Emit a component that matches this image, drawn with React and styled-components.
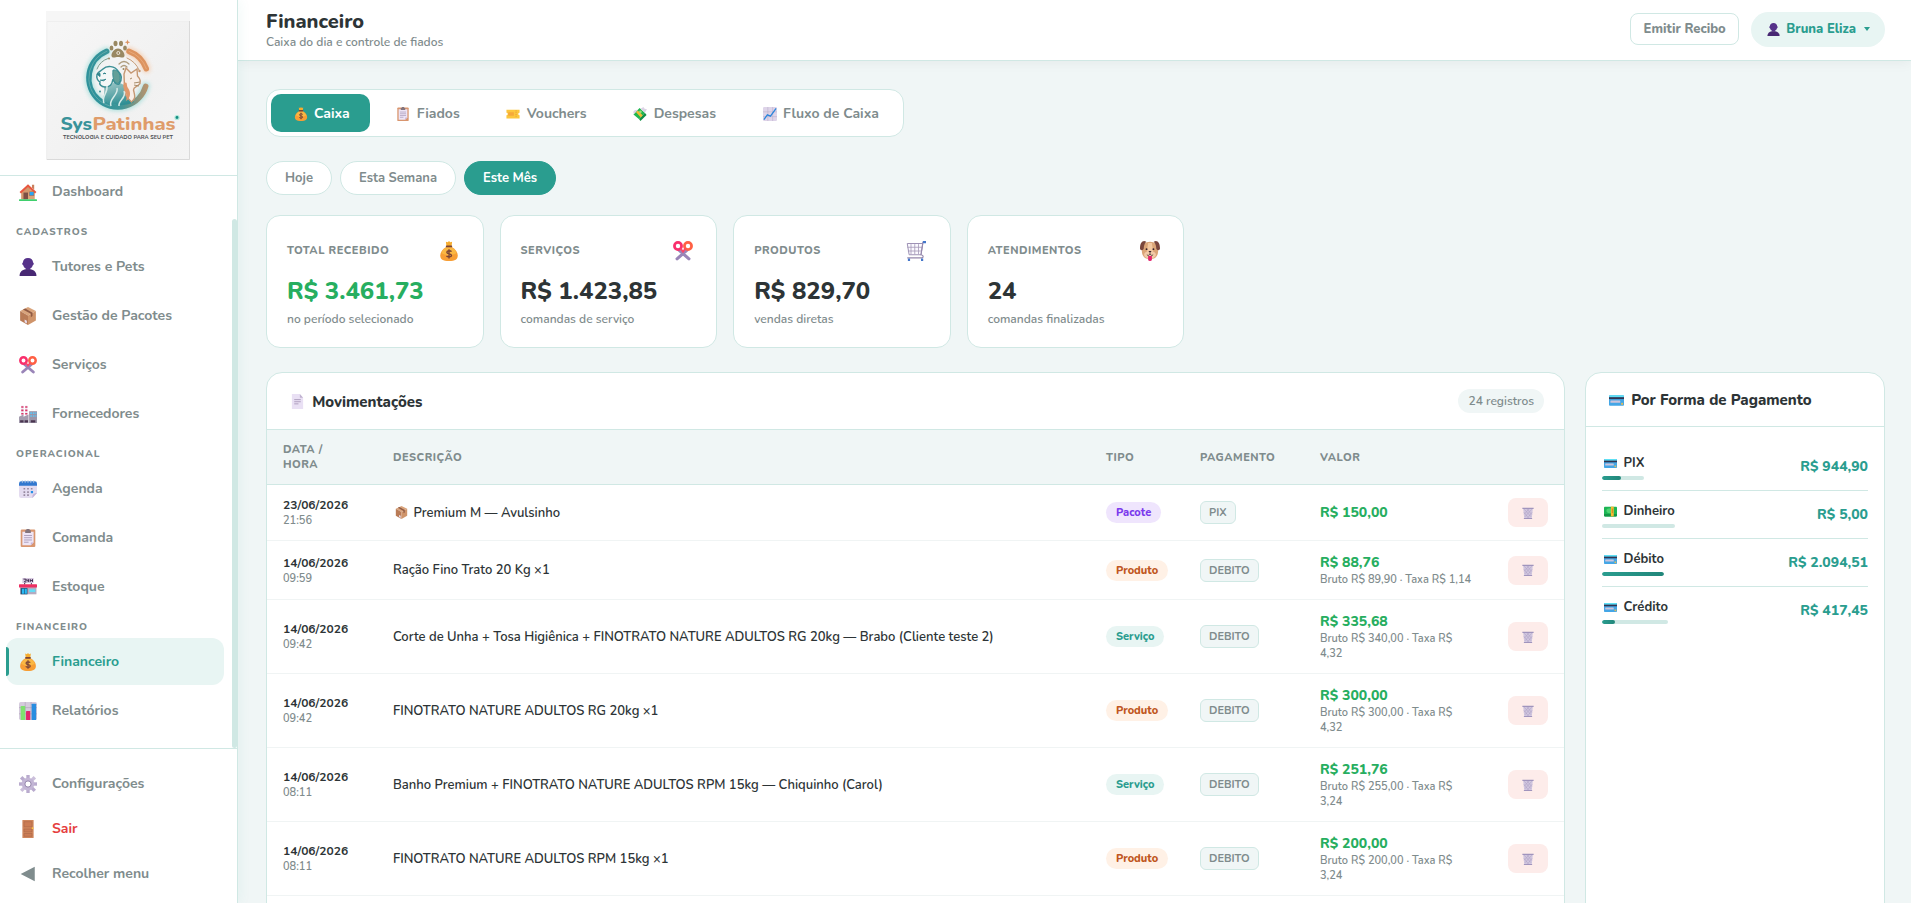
import React from 'react'

import styled, { createGlobalStyle, css } from 'styled-components'

const GlobalStyle = createGlobalStyle`
    * {
        box-sizing: border-box;
    }

    body {
        margin: 0;
        overflow: hidden;
        background: #f0f6f6;
        color: #2d3436;
        font-family: Nunito, Lato, "Open Sans", sans-serif;
        font-size: 14px;
        font-weight: 600;
    }

    button {
        font-family: inherit;
    }
`

/* icons, all on a 32x32 grid */
const shapes = {
    house: <>
        <path d="M4 16L16 5l12 11v13H4z" fill="#dba478" />
        <path d="M4 16L16 5l4 4-6 20H4z" fill="#c98a62" opacity=".45" />
        <path d="M23 3h4v9l-4-4z" fill="#c97f5c" />
        <path d="M16 2L1 16l2.500 2.500L16 7l12.500 11.500L31 16z" fill="#e8573f" />
        <rect x="8" y="17" width="8" height="12" fill="#7d4f46" />
        <rect x="18" y="15" width="9" height="8" fill="#b5714d" />
        <rect x="19" y="16" width="7" height="6" fill="#29a4f2" />
        <rect x="0" y="29" width="32" height="3" rx="1" fill="#3fcf6d" />
    </>,
    user: <>
        <path d="M16 0c5.500 0 9 3.200 9 8 2 0 1.500 4.500-.5 5-.6 3-2.300 4.600-4.500 5.600V21H12v-2.400c-2.200-1-3.900-2.600-4.500-5.600C5.500 12.500 5 8 7 8c0-4.800 3.500-8 9-8z" fill="#56328a" />
        <path d="M1 32c0-7.500 4.500-11 11-12h8c6.500 1 11 4.500 11 12z" fill="#482873" />
    </>,
    box: <>
        <path d="M16 0l14 7-14 8L2 7z" fill="#d9a47c" />
        <path d="M2 7l14 8v17L2 24z" fill="#b97b56" />
        <path d="M30 7l-14 8v17l14-8z" fill="#cf946a" />
        <path d="M7 4.500L21 12v6l3-2v-6L11 2.500z" fill="#8f5a44" />
        <path d="M10 22l4 2.300v5L10 27z" fill="#eadff0" />
    </>,
    scissors: <>
        <path d="M10 15l15.500 13.500M22 15L6.500 28.500" stroke="#9a85b8" strokeWidth="5" strokeLinecap="round" />
        <circle cx="8" cy="8" r="5.700" fill="none" stroke="#f92f6c" strokeWidth="4.400" />
        <circle cx="24" cy="8" r="5.700" fill="none" stroke="#ff6044" strokeWidth="4.400" />
        <path d="M12 12l4 5 4-5" fill="none" stroke="#f9466a" strokeWidth="3" />
    </>,
    factory: <>
        <path d="M4 1h4v18H4zM11 1h4v18h-4z" fill="#f0e8f4" />
        <path d="M4 2h4v3H4zM4 8h4v3H4zM4 14h4v3H4zM11 2h4v3h-4zM11 8h4v3h-4zM11 14h4v3h-4z" fill="#d83868" />
        <path d="M0 21l8-4v4l9-4v15H0z" fill="#a39cae" />
        <rect x="18" y="11" width="14" height="21" fill="#9c95a8" />
        <path d="M20 13h3v3h-3zM24.500 13h3v3h-3zM29 13h2v3h-2zM20 18h3v3h-3zM24.500 18h3v3h-3zM29 18h2v3h-2z" fill="#5fc5f5" />
        <path d="M2 27h6v4H2zM10 27h6v4h-6zM21 27h8v4h-8z" fill="#49344f" />
    </>,
    calendar: <>
        <path d="M0 8h32v15l-8 9H4a4 4 0 0 1-4-4z" fill="#e4dcf0" />
        <path d="M32 23l-8 9c-1-5 1-9 8-9z" fill="#c5b6d8" />
        <path d="M4 2h24a4 4 0 0 1 4 4v4H0V6a4 4 0 0 1 4-4z" fill="#3278cf" />
        <path d="M6 1v4M11 1v4M16 1v4M21 1v4M26 1v4" stroke="#a8c0e0" strokeWidth="2" />
        <path d="M8 14h3v3H8zM14.500 14h3v3h-3zM21 14h3v3h-3zM8 20h3v3H8zM14.500 20h3v3h-3zM8 25.500h3v3H8zM14.500 25.500h3v3h-3z" fill="#97899f" />
        <rect x="21" y="19.500" width="4" height="4" fill="#248fe8" />
    </>,
    clipboard: <>
        <rect x="3" y="1" width="26" height="31" rx="2" fill="#d9966f" />
        <path d="M6 5h20v19l-5 5H6z" fill="#eee5f6" />
        <path d="M26 24l-5 5v-5z" fill="#c6b3da" />
        <path d="M11 2h2a3 3 0 0 1 6 0h2v5H11z" fill="#83747d" />
        <path d="M9 11.500h14M9 15.500h14M9 19.500h14M9 23.500h8" stroke="#a394b4" strokeWidth="1.500" />
    </>,
    store: <>
        <rect x="6" y="0" width="20" height="9" fill="#d6c8df" />
        <path d="M8 2h4v2.500L9.500 7H13M14 2v3h3M17 2v5M20 2v5M24 2v5M20 4.500h4" stroke="#3a2548" strokeWidth="1.600" fill="none" />
        <path d="M9 9h2v3H9zM21 9h2v3h-2z" fill="#59415f" />
        <rect x="2" y="14" width="29" height="15" fill="#b5abc0" />
        <rect x="0" y="11" width="32" height="6" rx="1" fill="#ed2f62" />
        <rect x="3" y="18" width="12" height="11" fill="#1d4a6b" />
        <path d="M5 19h4v9H5zM10 19h4v9h-4z" fill="#2ab8f4" />
        <rect x="18" y="20" width="11" height="5" fill="#64dcf6" />
    </>,
    money: <>
        <path d="M11 1l3 1 2-2 2 2 3-1-1 8h-8z" fill="#f6ac2e" />
        <path d="M12 9h8c7 4 10 9 10 14 0 6-4 9-14 9S2 29 2 23C2 18 5 13 12 9z" fill="#f79e35" />
        <path d="M12 10h8c5 3 7 6 8 9-7 5-18 4-24 0 1-3 3-6 8-9z" fill="#fcc84c" opacity=".6" />
        <rect x="11" y="7" width="10" height="3" rx="1" fill="#7a4436" />
        <path d="M20 17c-1.500-2-7.500-2-7.500 1 0 3.500 7.500 1.800 7.500 5 0 3-6.500 3-8 .8M16 13v15" stroke="#7a4436" strokeWidth="2.200" fill="none" />
    </>,
    bars: <>
        <rect width="32" height="32" rx="3" fill="#d5cbdd" />
        <path d="M0 10h32M0 21h32M11 0v32M21.500 0v32" stroke="#a99bb3" strokeWidth="1" />
        <rect x="3" y="7" width="8" height="25" rx="1" fill="#7fe070" />
        <rect x="12.500" y="16" width="7.500" height="16" rx="1" fill="#e3246d" />
        <rect x="22.500" y="3" width="8" height="29" rx="1" fill="#288de0" />
    </>,
    gear: <>
        <path d="M13 0h6v32h-6z" fill="#b9abce" />
        <path d="M0 13h32v6H0z" fill="#b9abce" />
        <path d="M6 1.700L1.700 6 26 30.300 30.300 26z" fill="#b9abce" />
        <path d="M26 1.700L30.300 6 6 30.300 1.700 26z" fill="#cbbfdb" />
        <circle cx="16" cy="16" r="8.300" fill="#fff" stroke="#c3b6d5" strokeWidth="6" />
        <circle cx="16" cy="16" r="5.500" fill="none" stroke="#8e7fa6" strokeWidth="1.600" />
    </>,
    door: <>
        <rect x="6" y="0" width="20" height="32" rx="1" fill="#d0865c" />
        <path d="M9 3h14v9H9zM9 16h14v5H9zM9 24h14v5H9z" fill="#cb7c54" stroke="#aa6647" strokeWidth="1" />
        <circle cx="24" cy="14.500" r="1.500" fill="#ffc93c" />
    </>,
    back: <path d="M28 3v26L3 16z" fill="#7f8c8d" />,
    ticket: <>
        <path d="M1 6h30v7a3 3 0 0 0 0 6v7H1v-7a3 3 0 0 0 0-6z" fill="#fcc63d" />
        <path d="M5 12h13v8H5z" fill="#f5a93a" />
        <path d="M23 8v16" stroke="#d18427" strokeWidth="1.500" strokeDasharray="2 2" />
    </>,
    wings: <>
        <path d="M1 17L15 2l12 11-13 15z" fill="#20b850" />
        <path d="M14 28l13-15 4 5-14 14z" fill="#119044" />
        <path d="M17 4l7-4c1 4 4 5 8 5l-5 8zM2 16c-3-5 0-8 4-9l5-1z" fill="#dcd3e5" />
        <path d="M7 12l4-4 11 11-4 5z" fill="#f5ba35" />
        <circle cx="17" cy="11" r="3" fill="#9be07b" />
    </>,
    growth: <>
        <rect width="32" height="32" rx="3" fill="#ded4e9" />
        <path d="M0 11h32M0 22h32M11 0v32M22 0v32" stroke="#b7aec8" strokeWidth="1.200" />
        <path d="M2 29l8-11 7 3L30 3" stroke="#2b86dc" strokeWidth="3" fill="none" />
    </>,
    cart: <>
        <path d="M2 4h25l-3 18H5z" fill="#fbfaff" stroke="#9e92b5" strokeWidth="1.600" />
        <path d="M2 10h24M3 16h22M8 5v16M14 5v16M20 5v16" stroke="#a599b8" strokeWidth="1.300" />
        <path d="M31 2h-4l-3 20c5 1 4 5 1 5H2" stroke="#9688ac" strokeWidth="1.800" fill="none" />
        <path d="M27 0h5v3.500h-5zM3 28h3.500v4H3zM24 28h3.500v4H24z" fill="#4476ca" />
    </>,
    dog: <>
        <path d="M16 1c8 0 13 5 13 14 0 10-5 14-13 14S3 25 3 15C3 6 8 1 16 1z" fill="#dba577" />
        <path d="M10 1C4-2 0 3 0 12c0 3 5 4 6 0 0-4 1-8 4-11zM22 1c6-3 10 2 10 11 0 3-5 4-6 0 0-4-1-8-4-11z" fill="#7a463c" />
        <path d="M13 3h6l2 15H11z" fill="#f3c8a0" />
        <ellipse cx="16" cy="22" rx="9.500" ry="6" fill="#f2caa7" />
        <circle cx="10.500" cy="13" r="1.500" fill="#35202b" />
        <circle cx="21.500" cy="13" r="1.500" fill="#35202b" />
        <path d="M13.500 16h5L16 19z" fill="#35202b" />
        <path d="M11 22c2 2 4 1 5-2 1 3 3 4 5 2" stroke="#35202b" strokeWidth="1.200" fill="none" />
        <path d="M13 24h6v5a3 3 0 0 1-6 0z" fill="#e3246d" />
    </>,
    page: <>
        <path d="M4 0h17l7 8v24H4z" fill="#e9e0f4" />
        <path d="M21 0v8h7z" fill="#c0b2d0" />
        <path d="M9 12h14M9 16.500h14M9 21h9" stroke="#ac9cbc" strokeWidth="2" />
    </>,
    card: <>
        <path d="M2 5h28a2 2 0 0 1 2 2v18a2 2 0 0 1-2 2H2a2 2 0 0 1-2-2V7a2 2 0 0 1 2-2z" fill="#44a6e6" />
        <path d="M1 5h30l1 4H0z" fill="#5fe0f4" />
        <rect y="9" width="32" height="4" fill="#313450" />
        <rect x="3" y="16" width="21" height="5" rx="1" fill="#ccc4dc" />
        <rect x="26" y="21" width="4" height="4" fill="#e8bd52" />
    </>,
    cash: <>
        <rect y="4" width="32" height="24" rx="2" fill="#1cb554" />
        <path d="M0 22h32v4a2 2 0 0 1-2 2H2a2 2 0 0 1-2-2z" fill="#149546" />
        <ellipse cx="14" cy="14" rx="8" ry="6" fill="#4fd473" />
        <rect x="17" y="4" width="7" height="24" fill="#f9ba32" />
        <path d="M20.500 9v11" stroke="#c27a21" strokeWidth="2" />
    </>,
    trash: <>
        <path d="M3 4h26l-3 26H6z" fill="#d0c6df" />
        <path d="M6 6l18 20M13 5l13 15M5 14l12 15M26 6L8 26M19 5L6 19M27 14L15 29" stroke="#a99cc0" strokeWidth="1.300" />
        <path d="M1 2h30v3H1zM5 29h22v3H5z" fill="#a094bd" />
    </>,
}

const Svg = styled.svg`
    display: inline-block;
    flex-shrink: 0;
    width: ${p => p.$size}px;
    height: ${p => p.$size}px;
    margin: 0 ${p => p.$pad || 0}px;
    vertical-align: ${p => p.$drop || -3}px;
`

const Icon = ({ name, size, pad, drop }) => (
    <Svg viewBox="0 0 32 32" $size={size} $pad={pad} $drop={drop} aria-hidden="true">{shapes[name]}</Svg>
)

const Layout = styled.div`
    display: grid;
    grid-template-columns: 238px 1fr;
    height: 100vh;
    overflow: hidden;
`

const Sidebar = styled.aside`
    position: relative;
    z-index: 2;
    display: flex;
    flex-direction: column;
    height: 100vh;
    background: #fff;
    border-right: 1px solid #d0e8e4;
    box-shadow: 2px 0 12px rgba(42, 157, 143, 0.06);
`

const Brand = styled.div`
    display: flex;
    justify-content: center;
    flex-shrink: 0;
    height: 176px;
    padding: 11px 2px 0 0;
    border-bottom: 1px solid #d0e8e4;
`

const Nav = styled.nav`
    position: relative;
    flex: 1;
    overflow: hidden;
`

const NavList = styled.div`
    margin-top: -8px;
`

const ScrollThumb = styled.div`
    position: absolute;
    top: 43px;
    right: 0;
    bottom: 0;
    width: 5px;
    border-radius: 3px;
    background: #d0e8e4;
`

const NavTitle = styled.div`
    height: 26px;
    padding: 8px 16px 0;
    color: #7f8c8d;
    font-size: 10px;
    font-weight: 800;
    line-height: 14px;
    letter-spacing: 1px;
    text-transform: uppercase;
`

const NavItem = styled.a`
    position: relative;
    display: flex;
    align-items: center;
    gap: 12px;
    height: ${p => p.$small ? 43 : 47}px;
    margin: 0 13px 2px 6px;
    padding-left: 10px;
    border-radius: 12px;
    color: ${p => p.$danger ? '#e53e3e' : '#7f8c8d'};
    font-weight: 700;

    ${p => p.$active && css`
        background: #e8f5f3;
        color: #2a9d8f;

        &::before {
            content: '';
            position: absolute;
            left: 0;
            top: 9px;
            width: 3px;
            height: 29px;
            border-radius: 0 3px 3px 0;
            background: #2a9d8f;
        }
    `}
`

const NavIcon = styled.span`
    display: flex;
    justify-content: center;
    width: 24px;
`

const NavFooter = styled.div`
    flex-shrink: 0;
    height: 155px;
    padding-top: 13px;
    border-top: 1px solid #d0e8e4;
`

const Main = styled.div`
    display: flex;
    flex-direction: column;
    min-width: 0;
    height: 100vh;
`

const Header = styled.header`
    z-index: 1;
    display: flex;
    align-items: center;
    justify-content: space-between;
    flex-shrink: 0;
    height: 61px;
    padding: 0 26px 2px 28px;
    background: #fff;
    border-bottom: 1px solid #d0e8e4;
    box-shadow: 0 2px 12px rgba(0, 0, 0, 0.05);

    h1 {
        margin: 0;
        padding-top: 1px;
        font-size: 20px;
        font-weight: 800;
        line-height: 25px;
    }

    p {
        margin: 0;
        color: #7f8c8d;
        font-size: 12px;
        line-height: 16px;
    }
`

const Actions = styled.div`
    display: flex;
    align-items: center;
    gap: 12px;
`

const OutlineButton = styled.button`
    height: 32px;
    padding: 0 12.500px;
    border: 1px solid #d0e8e4;
    border-radius: 8px;
    background: #fff;
    color: #7f8c8d;
    font-size: 13px;
    font-weight: 800;
`

const UserButton = styled.button`
    display: flex;
    align-items: center;
    height: 35px;
    padding: 0 15px 0 14px;
    border: 0;
    border-radius: 20px;
    background: #e8f5f3;
    color: #2a9d8f;
    font-size: 13px;
    font-weight: 800;

    span {
        margin-left: 4px;
    }
`

const Caret = styled.i`
    margin-left: 8px;
    border: 3px solid transparent;
    border-top: 4px solid #2a9d8f;
    border-bottom: 0;
`

const Content = styled.main`
    flex: 1;
    padding: 28px 26px 0 28px;
    min-height: 0;
`

const Tabs = styled.div`
    display: inline-flex;
    gap: 4px;
    height: 48px;
    padding: 4px;
    border: 1px solid #d0e8e4;
    border-radius: 14px;
    background: #fff;
`

const Tab = styled.button`
    padding: 0 20px;
    border: 0;
    border-radius: 10px;
    background: ${p => p.$active ? '#2a9d8f' : 'transparent'};
    color: ${p => p.$active ? '#fff' : '#7f8c8d'};
    font-size: 14px;
    font-weight: 700;

    svg {
        margin-right: 6.500px;
    }
`

const Periods = styled.div`
    display: flex;
    gap: 8px;
    margin: 24px 0 20px;
`

const Period = styled.button`
    height: 34px;
    padding: 0 18px;
    border: 1px solid ${p => p.$active ? '#2a9d8f' : '#d0e8e4'};
    border-radius: 20px;
    background: ${p => p.$active ? '#2a9d8f' : '#fff'};
    color: ${p => p.$active ? '#fff' : '#7f8c8d'};
    font-size: 13px;
    font-weight: 700;
`

const Cards = styled.div`
    display: grid;
    grid-template-columns: repeat(7, 1fr);
    gap: 16px;
    margin-bottom: 24px;
`

const Card = styled.div`
    height: 133px;
    padding: 21px 20px 0;
    border: 1px solid #d0e8e4;
    border-radius: 14px;
    background: #fff;

    p {
        margin: 0;
        color: #7f8c8d;
        font-size: 12px;
        line-height: 16px;
    }
`

const CardTop = styled.div`
    display: flex;
    align-items: center;
    justify-content: space-between;
    height: 27px;
    margin-bottom: 11px;
    color: #7f8c8d;
    font-size: 11px;
    font-weight: 800;
    letter-spacing: 0.5px;
    text-transform: uppercase;
`

const CardValue = styled.div`
    margin-bottom: 3px;
    color: ${p => p.$green ? '#27ae60' : '#2d3436'};
    font-size: 24px;
    font-weight: 800;
    line-height: 33px;
`

const Panels = styled.div`
    display: grid;
    grid-template-columns: 1fr 300px;
    gap: 20px;
`

const Panel = styled.section`
    min-height: 560px;
    overflow: hidden;
    border: 1px solid #d0e8e4;
    border-radius: 16px;
    background: #fff;
`

const PanelHeader = styled.div`
    display: flex;
    align-items: center;
    justify-content: space-between;
    height: ${p => p.$short ? 54 : 57}px;
    padding: 0 20px;
    border-bottom: 1px solid #d0e8e4;

    h2 {
        margin: 0;
        padding-top: ${p => p.$short ? 0 : 2}px;
        font-size: 15px;
        font-weight: 800;
    }
`

const Count = styled.span`
    padding: 4px 10px;
    border-radius: 12px;
    background: #f0f6f6;
    color: #7f8c8d;
    font-size: 12px;
    line-height: 16px;
`

const Table = styled.table`
    width: 100%;
    table-layout: fixed;
    border-spacing: 0;
    font-size: 13px;

    th {
        padding: 12px 16px;
        background: #f0f6f6;
        border-bottom: 1px solid #d0e8e4;
        color: #7f8c8d;
        font-size: 11px;
        font-weight: 800;
        line-height: 15px;
        letter-spacing: 0.5px;
        text-align: left;
        text-transform: uppercase;
    }

    td {
        padding: 12px 16px;
        border-bottom: 1px solid #f0f4f4;
    }
`

const When = styled.td`
    font-size: 12px;
    font-weight: 700;
    line-height: 16px;

    span {
        display: block;
        color: #7f8c8d;
        font-size: 11px;
        font-weight: 600;
        line-height: 15px;
    }
`

const tones = {
    Pacote: ['#efe5fd', '#7c3aed'],
    Produto: ['#fff1e6', '#c05621'],
    Serviço: ['#e8f5f3', '#2a9d8f'],
}

const Kind = styled.span`
    display: inline-block;
    padding: 3px 10px;
    border-radius: 20px;
    background: ${p => tones[p.$kind][0]};
    color: ${p => tones[p.$kind][1]};
    font-size: 11px;
    font-weight: 800;
    line-height: 15px;
`

const Method = styled.span`
    display: inline-block;
    padding: 3px 8px;
    border: 1px solid #d0e8e4;
    border-radius: 6px;
    background: #f0f6f6;
    color: #7f8c8d;
    font-size: 11px;
    font-weight: 700;
    line-height: 15px;
`

const Amount = styled.td`
    color: #27ae60;
    font-size: 14px;
    font-weight: 800;
    line-height: 19px;

    small {
        display: block;
        color: #7f8c8d;
        font-size: 11px;
        font-weight: 600;
        line-height: 15px;
    }
`

const DeleteButton = styled.button`
    display: flex;
    align-items: center;
    justify-content: center;
    width: 40px;
    height: 29px;
    padding: 0;
    border: 0;
    border-radius: 8px;
    background: #fdecea;
`

const DeleteCell = styled.td`
    && {
        padding-top: 0;
        padding-bottom: 0;
    }
`

const Payments = styled.div`
    padding: 16px;
`

const Payment = styled.div`
    display: flex;
    align-items: center;
    justify-content: space-between;
    height: 48px;
    border-bottom: 1px solid #d0e8e4;

    &:last-child {
        border-bottom-color: transparent;
    }

    strong {
        color: #2a9d8f;
        font-weight: 800;
    }
`

const PaymentName = styled.div`
    padding-top: 1px;
    font-size: 13px;
    font-weight: 700;
    line-height: 18px;

    svg {
        margin-right: 6.500px;
    }
`

const Track = styled.div`
    height: 4px;
    margin-top: 4px;
    overflow: hidden;
    border-radius: 2px;
    background: #d0e8e4;
`

const Fill = styled.div`
    height: 4px;
    border-radius: 2px;
    background: linear-gradient(90deg, #2a9d8f, #21867a);
`

const Logo = () => (
    <svg width="144" height="149" viewBox="0 0 144 149">
        <defs>
            <linearGradient id="paper" x1="0" y1="0" x2="1" y2="1">
                <stop offset="0" stopColor="#f7f7f7" />
                <stop offset=".6" stopColor="#f1f1f1" />
                <stop offset="1" stopColor="#f4f4f4" />
            </linearGradient>
            <linearGradient id="ring" gradientUnits="userSpaceOnUse" x1="48" y1="70" x2="102" y2="64">
                <stop offset="0" stopColor="#2f929b" />
                <stop offset=".45" stopColor="#3f9698" />
                <stop offset="1" stopColor="#c3946a" />
            </linearGradient>
            <linearGradient id="body" gradientUnits="userSpaceOnUse" x1="60" y1="60" x2="68" y2="95">
                <stop offset="0" stopColor="#4a9a98" stopOpacity=".25" />
                <stop offset="1" stopColor="#2f8f94" />
            </linearGradient>
            <filter id="glow" x="-30%" y="-30%" width="160%" height="160%">
                <feGaussianBlur stdDeviation="2.200" />
            </filter>
        </defs>
        <rect width="144" height="149" fill="url(#paper)" />
        <rect width="144" height="10" fill="#f6f6f6" />
        <path d="M1 148V10.500h142" stroke="#efefef" fill="none" />
        <path d="M143.500 10v138.500H1" stroke="#dadada" fill="none" />

        <g fill="none" strokeLinecap="round">
            <g filter="url(#glow)" opacity=".65">
                <path d="M60.700 40.300A29 29 0 1 0 99.700 75.300" stroke="#8ad8d2" strokeWidth="8" />
                <path d="M83 40.300A29 29 0 0 1 100.300 57.700" stroke="#f7bd92" strokeWidth="8" />
            </g>
            <path d="M60.700 40.300A29 29 0 1 0 99.700 75.300" stroke="url(#ring)" strokeWidth="5.500" />
            <path d="M83 40.300A29 29 0 0 1 100.300 57.700" stroke="#dc935f" strokeWidth="5.500" />
            <path d="M60.700 40.300A29 29 0 0 0 64 95" stroke="#5fa9a9" strokeWidth="1" />
            <path d="M83 40.300A29 29 0 0 1 100.300 57.700" stroke="#e8a878" strokeWidth="1" />
            <path d="M51 58Q54 50 62 47.500" stroke="#7c9c8d" strokeWidth="1" />
            <path d="M81 47Q90 51 93 59" stroke="#c79b76" strokeWidth="1" />
            <path d="M73 53Q78 48 83 53M75 56Q78 53 81 56" stroke="#ae9c7d" strokeWidth="1.200" />
        </g>
        <g fill="#998862">
            <ellipse cx="65.500" cy="37" rx="1.900" ry="2.600" />
            <ellipse cx="69.500" cy="32.500" rx="2" ry="2.800" />
            <ellipse cx="75" cy="32.500" rx="2" ry="2.800" />
            <ellipse cx="79" cy="37" rx="1.900" ry="2.600" />
            <path d="M72 37.500c4 0 7 5 6.500 7.500-.8 2.800-4 1-6.500 1s-5.700 1.800-6.500-1C65 42.500 68 37.500 72 37.500z" />
            <circle cx="72.300" cy="42" r="1.500" fill="none" stroke="#eee6dc" />
            <path d="M81.500 28.500l.7 2 2 .7-2 .7-.7 2-.7-2-2-.7 2-.7z" fill="#db9260" />
            <circle cx="63" cy="47.500" r="1" />
            <circle cx="93.500" cy="60" r="1.200" fill="#c79368" />
            <circle cx="77.500" cy="58" r="1" />
            <circle cx="54" cy="80.500" r="1" fill="#3f9698" />
        </g>
        <path d="M56 73c3 2 3 8 1 16 8 6 21 7 31 2-5-6-11-8-10-17l-8-4c-4 3-8 6-14 3z" fill="url(#body)" />
        <path d="M51 64c0-3 4-4 6-6 4-4 12-3 15 2 4 4 4 9 1 13-3 1-5-2-6-5-1 6-3 8-8 8-4 0-6-3-5-5-2-1-4-4-3-7z" fill="#f4f8f7" stroke="#3b8f95" strokeWidth="1.500" />
        <path d="M67 59c6-1 9 7 6 13-4 2-7-4-6-13z" fill="#629f98" stroke="#3b8f95" />
        <path d="M51 63l3-.5v3zM57 63q2-2 3 0M54 69q4 2 6-1" fill="#2f858d" stroke="#2f858d" />
        <path d="M78 63l2-6 5 5 6-4 .5 7c3 3 4 7 1 9-2 2-5 2-5 5 1 5 3 8-2 12-4-4-8-8-7-14z" fill="#f8eee7" stroke="#c59772" strokeWidth="1.400" />
        <path d="M84 68l2-1M88 72l6-1M88 74l5 1" stroke="#a88c69" />
        <path d="M78 72c-3 6 5 10 2 18 5-3 5-9 2-13-2-3 0-7-4-5z" fill="#e0986c" />
        <path d="M58 92c-3-6 4-10 3-17M65 95c-3-7 8-11 6-18M73 95c-1-6 8-8 5-15" stroke="#d7ebe8" strokeWidth="1.500" fill="none" />

        <text y="119" fontSize="18.500" fontWeight="800" fontFamily="Nunito, Lato, sans-serif">
            <tspan x="14.500" fill="#3a939a" textLength="31.500" lengthAdjust="spacingAndGlyphs">Sys</tspan>
            <tspan x="46.500" fill="#df9c6a" textLength="83" lengthAdjust="spacingAndGlyphs">Patinhas</tspan>
        </text>
        <circle cx="131" cy="106.500" r="2.600" fill="#8ce3cf" opacity=".7" />
        <circle cx="131" cy="106.500" r="1.400" fill="#168c82" />
        <text x="17" y="128.300" fontSize="5.600" fontWeight="700" fill="#4c4f52" textLength="110" lengthAdjust="spacingAndGlyphs" fontFamily="Nunito, Lato, sans-serif">TECNOLOGIA E CUIDADO PARA SEU PET</text>
    </svg>
)

const menu = [
    ['', [['house', 'Dashboard']]],
    ['Cadastros', [['user', 'Tutores e Pets'], ['box', 'Gestão de Pacotes'], ['scissors', 'Serviços'], ['factory', 'Fornecedores']]],
    ['Operacional', [['calendar', 'Agenda'], ['clipboard', 'Comanda'], ['store', 'Estoque']]],
    ['Financeiro', [['money', 'Financeiro'], ['bars', 'Relatórios']]],
]

const footerMenu = [['gear', 'Configurações'], ['door', 'Sair'], ['back', 'Recolher menu']]

const tabs = [['money', 'Caixa'], ['clipboard', 'Fiados'], ['ticket', 'Vouchers'], ['wings', 'Despesas'], ['growth', 'Fluxo de Caixa']]

const periods = ['Hoje', 'Esta Semana', 'Este Mês']

const cards = [
    ['Total recebido', 'money', 'R$ 3.461,73', 'no período selecionado'],
    ['Serviços', 'scissors', 'R$ 1.423,85', 'comandas de serviço'],
    ['Produtos', 'cart', 'R$ 829,70', 'vendas diretas'],
    ['Atendimentos', 'dog', '24', 'comandas finalizadas'],
]

const rows = [
    { date: '23/06/2026', time: '21:56', icon: 'box', text: 'Premium M — Avulsinho', kind: 'Pacote', method: 'PIX', value: 'R$ 150,00' },
    { date: '14/06/2026', time: '09:59', text: 'Ração Fino Trato 20 Kg ×1', kind: 'Produto', method: 'DEBITO', value: 'R$ 88,76', fee: 'Bruto R$ 89,90 · Taxa R$ 1,14' },
    { date: '14/06/2026', time: '09:42', text: 'Corte de Unha + Tosa Higiênica + FINOTRATO NATURE ADULTOS RG 20kg — Brabo (Cliente teste 2)', kind: 'Serviço', method: 'DEBITO', value: 'R$ 335,68', fee: 'Bruto R$ 340,00 · Taxa R$ 4,32' },
    { date: '14/06/2026', time: '09:42', text: 'FINOTRATO NATURE ADULTOS RG 20kg ×1', kind: 'Produto', method: 'DEBITO', value: 'R$ 300,00', fee: 'Bruto R$ 300,00 · Taxa R$ 4,32' },
    { date: '14/06/2026', time: '08:11', text: 'Banho Premium + FINOTRATO NATURE ADULTOS RPM 15kg — Chiquinho (Carol)', kind: 'Serviço', method: 'DEBITO', value: 'R$ 251,76', fee: 'Bruto R$ 255,00 · Taxa R$ 3,24' },
    { date: '14/06/2026', time: '08:11', text: 'FINOTRATO NATURE ADULTOS RPM 15kg ×1', kind: 'Produto', method: 'DEBITO', value: 'R$ 200,00', fee: 'Bruto R$ 200,00 · Taxa R$ 3,24' },
]

const payments = [
    ['card', 'PIX', 'R$ 944,90', 45],
    ['cash', 'Dinheiro', 'R$ 5,00', 0],
    ['card', 'Débito', 'R$ 2.094,51', 100],
    ['card', 'Crédito', 'R$ 417,45', 20],
]

const Menu = () => (
    <Sidebar>
        <Brand><Logo /></Brand>
        <Nav>
            <NavList>
                {menu.map(([title, items]) => (
                    <React.Fragment key={title}>
                        {title && <NavTitle>{title}</NavTitle>}
                        {items.map(([icon, label]) => (
                            <NavItem key={label} $active={label === 'Financeiro'}>
                                <NavIcon><Icon name={icon} size={18} /></NavIcon>
                                {label}
                            </NavItem>
                        ))}
                    </React.Fragment>
                ))}
            </NavList>
            <ScrollThumb />
        </Nav>
        <NavFooter>
            {footerMenu.map(([icon, label]) => (
                <NavItem key={label} $small $danger={label === 'Sair'}>
                    <NavIcon><Icon name={icon} size={18} /></NavIcon>
                    {label}
                </NavItem>
            ))}
        </NavFooter>
    </Sidebar>
)

const Movements = () => (
    <Panel>
        <PanelHeader>
            <h2><Icon name="page" size={15} pad={3} drop={-2} /> Movimentações</h2>
            <Count>24 registros</Count>
        </PanelHeader>
        <Table>
            <colgroup>
                <col width="110" />
                <col />
                <col width="94" />
                <col width="120" />
                <col width="188" />
                <col width="72" />
            </colgroup>
            <thead>
                <tr>
                    <th>Data /<br />Hora</th>
                    <th>Descrição</th>
                    <th>Tipo</th>
                    <th>Pagamento</th>
                    <th>Valor</th>
                    <th></th>
                </tr>
            </thead>
            <tbody>
                {rows.map((row, i) => (
                    <tr key={i}>
                        <When>{row.date}<span>{row.time}</span></When>
                        <td>{row.icon && <><Icon name={row.icon} size={13} pad={2} drop={-2} /> </>}{row.text}</td>
                        <td><Kind $kind={row.kind}>{row.kind}</Kind></td>
                        <td><Method>{row.method}</Method></td>
                        <Amount>{row.value}{row.fee && <small>{row.fee}</small>}</Amount>
                        <DeleteCell><DeleteButton><Icon name="trash" size={12} /></DeleteButton></DeleteCell>
                    </tr>
                ))}
            </tbody>
        </Table>
    </Panel>
)

const App = () => {
    return (
        <Layout>
            <GlobalStyle />
            <Menu />
            <Main>
                <Header>
                    <div>
                        <h1>Financeiro</h1>
                        <p>Caixa do dia e controle de fiados</p>
                    </div>
                    <Actions>
                        <OutlineButton>Emitir Recibo</OutlineButton>
                        <UserButton>
                            <Icon name="user" size={13} pad={2} />
                            <span>Bruna Eliza</span>
                            <Caret />
                        </UserButton>
                    </Actions>
                </Header>
                <Content>
                    <Tabs>
                        {tabs.map(([icon, label], i) => (
                            <Tab key={label} $active={i === 0}><Icon name={icon} size={14} pad={2.5} />{label}</Tab>
                        ))}
                    </Tabs>
                    <Periods>
                        {periods.map(label => <Period key={label} $active={label === 'Este Mês'}>{label}</Period>)}
                    </Periods>
                    <Cards>
                        {cards.map(([label, icon, value, note], i) => (
                            <Card key={label}>
                                <CardTop>{label}<Icon name={icon} size={20} pad={3.5} /></CardTop>
                                <CardValue $green={i === 0}>{value}</CardValue>
                                <p>{note}</p>
                            </Card>
                        ))}
                    </Cards>
                    <Panels>
                        <Movements />
                        <Panel>
                            <PanelHeader $short>
                                <h2><Icon name="card" size={15} pad={3} drop={-3} /> Por Forma de Pagamento</h2>
                            </PanelHeader>
                            <Payments>
                                {payments.map(([icon, label, value, share]) => (
                                    <Payment key={label}>
                                        <PaymentName>
                                            <Icon name={icon} size={13} pad={2} />{label}
                                            <Track><Fill style={{ width: `${share}%` }} /></Track>
                                        </PaymentName>
                                        <strong>{value}</strong>
                                    </Payment>
                                ))}
                            </Payments>
                        </Panel>
                    </Panels>
                </Content>
            </Main>
        </Layout>
    );
}

export default App;
